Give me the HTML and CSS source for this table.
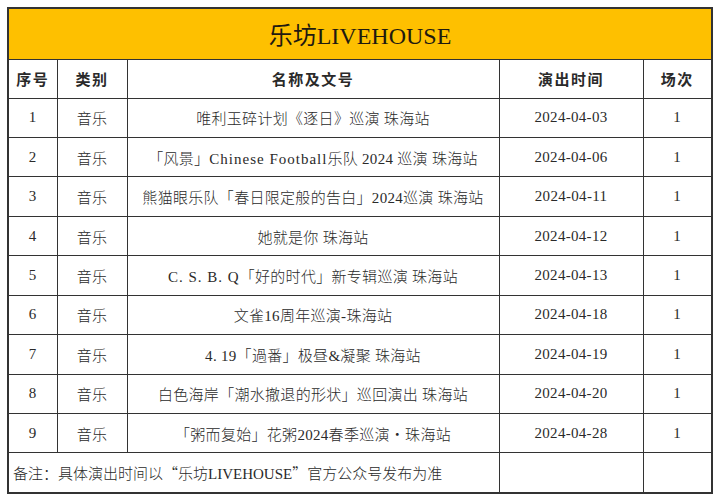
FILE: index.html
```html
<!DOCTYPE html>
<html lang="zh-CN">
<head>
<meta charset="utf-8">
<title>乐坊LIVEHOUSE</title>
<link rel="stylesheet" href="styles.css">
</head>
<body>
<table class="sheet">
  <colgroup>
    <col class="c-no"><col class="c-type"><col class="c-name"><col class="c-date"><col class="c-count">
  </colgroup>
  <thead>
    <tr class="title-row"><th colspan="5" class="title">乐坊LIVEHOUSE</th></tr>
    <tr class="head-row"><th>序号</th><th>类别</th><th>名称及文号</th><th>演出时间</th><th>场次</th></tr>
  </thead>
  <tbody>
    <tr><td>1</td><td>音乐</td><td>唯利玉碎计划《逐日》巡演 珠海站</td><td>2024-04-03</td><td>1</td></tr>
    <tr><td>2</td><td>音乐</td><td>「风景」<span class="lat">Chinese Football</span>乐队 2024 巡演 珠海站</td><td>2024-04-06</td><td>1</td></tr>
    <tr><td>3</td><td>音乐</td><td>熊猫眼乐队「春日限定般的告白」2024巡演 珠海站</td><td>2024-04-11</td><td>1</td></tr>
    <tr><td>4</td><td>音乐</td><td>她就是你 珠海站</td><td>2024-04-12</td><td>1</td></tr>
    <tr><td>5</td><td>音乐</td><td><span class="lat">C. S. B. Q</span>「好的时代」新专辑巡演 珠海站</td><td>2024-04-13</td><td>1</td></tr>
    <tr><td>6</td><td>音乐</td><td>文雀16周年巡演-珠海站</td><td>2024-04-18</td><td>1</td></tr>
    <tr><td>7</td><td>音乐</td><td>4. 19「過番」极昼&amp;凝聚 珠海站</td><td>2024-04-19</td><td>1</td></tr>
    <tr><td>8</td><td>音乐</td><td>白色海岸「潮水撤退的形状」巡回演出 珠海站</td><td>2024-04-20</td><td>1</td></tr>
    <tr><td>9</td><td>音乐</td><td>「粥而复始」花粥2024春季巡演<span class="fw">・</span>珠海站</td><td>2024-04-28</td><td>1</td></tr>
    <tr class="note-row"><td colspan="3" class="note">备注：具体演出时间以<span class="fw">“</span>乐坊LIVEHOUSE<span class="fw">”</span>官方公众号发布为准</td><td></td><td></td></tr>
  </tbody>
</table>
</body>
</html>
```
FILE: styles.css
```css
html, body {
  margin: 0;
  padding: 0;
  background: #ffffff;
}
body {
  padding: 7px 0 0 7px;
  font-family: "Liberation Serif", "Noto Sans CJK SC", serif;
  color: #2a2a2a;
}
.sheet {
  border-collapse: collapse;
  table-layout: fixed;
  width: 704px;
  border: 2px solid #333;
}
.c-no { width: 49px; }
.c-type { width: 70px; }
.c-name { width: 372px; }
.c-date { width: 144px; }
.c-count { width: 69px; }
.sheet th,
.sheet td {
  border: 1px solid #333;
  padding: 0;
  text-align: center;
  vertical-align: middle;
  font-size: 15px;
  font-weight: 300;
  white-space: nowrap;
  letter-spacing: 0.3px;
}
.title-row { height: 51px; }
.sheet th.title {
  background: #fec000;
  font-size: 24px;
  font-weight: 400;
  color: #1f1a10;
  letter-spacing: 0;
}
.head-row { height: 39px; }
.head-row th {
  font-weight: 700;
  letter-spacing: 1.5px;
}
tbody tr { height: 39.45px; }
.note-row { height: 40px; }
.sheet td.note {
  text-align: left;
  padding-left: 4px;
  letter-spacing: 0;
}
.lat {
  letter-spacing: 1px;
}
.fw {
  font-family: "Noto Sans CJK SC", sans-serif;
}
```
